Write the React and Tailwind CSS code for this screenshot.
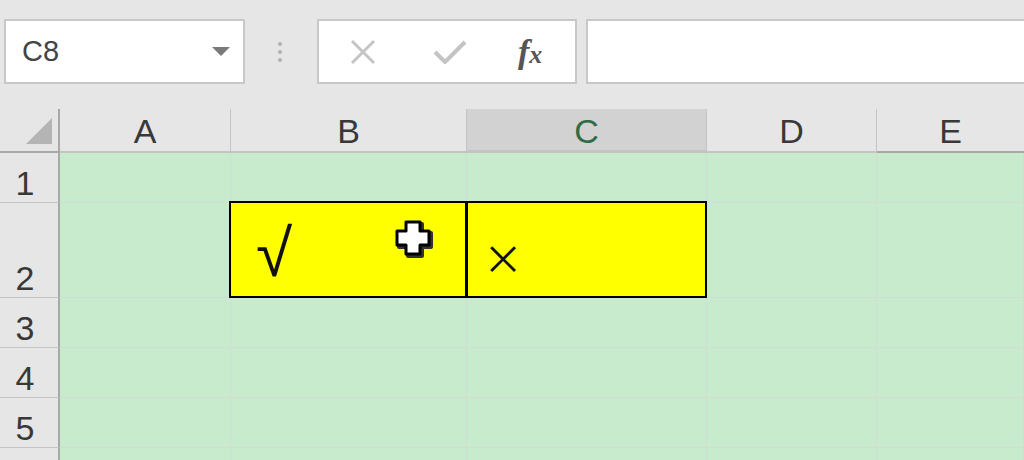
import React from "react";

const font = { fontFamily: '"Liberation Sans", "Noto Sans CJK SC", sans-serif' };

function HeaderCell({ w, label, selected, last }) {
  return (
    <div
      className={`${w} h-full flex items-center justify-center text-[34px] leading-none ${
        selected
          ? "bg-[#d2d2d2] text-[#2f6b47] border-b-[3px] border-[#217346]"
          : "text-[#383838] border-b-2 border-[#a8a8a8]"
      } ${last ? "" : "border-r border-[#c4c4c4]"}`}
    >
      <span className="pt-[2px]">{label}</span>
    </div>
  );
}

function RowHeader({ h, n }) {
  return (
    <div
      className={`w-[60px] ${h} shrink-0 bg-[#e6e6e6] border-r-2 border-b border-r-[#a8a8a8] border-b-[#c4c4c4] flex items-end justify-center pr-[8px] pb-[2px] text-[34px] leading-none text-[#383838]`}
    >
      {n}
    </div>
  );
}

function Cell({ w, children, yellow, cls = "" }) {
  return (
    <div
      className={`${w} h-full relative border-r border-b border-[#d2dcd3] ${
        yellow ? "bg-[#ffff00]" : "bg-[#c8eacd]"
      } ${cls}`}
    >
      {children}
    </div>
  );
}

function Row({ h, n, children }) {
  return (
    <div className={`flex ${h}`}>
      <RowHeader h={h} n={n} />
      {children}
    </div>
  );
}

function EmptyCells() {
  return (
    <>
      <Cell w="w-[171px]" />
      <Cell w="w-[236px]" />
      <Cell w="w-[240px]" />
      <Cell w="w-[170px]" />
      <Cell w="flex-1" />
    </>
  );
}

export default function App() {
  return (
    <div className="w-[1024px] h-[460px] overflow-hidden bg-[#e6e6e6] relative" style={font}>
      {/* Formula bar */}
      <div className="h-[109px] flex items-start pt-[19px] pl-[4px]">
        <div className="w-[241px] h-[65px] shrink-0 bg-white border-2 border-[#c8c8c8] flex items-center justify-between pl-[16px] pr-[13px]">
          <span className="text-[29px] leading-none text-[#444444]">C8</span>
          <svg width="18" height="9" viewBox="0 0 18 9">
            <path d="M0 0 L18 0 L9 9 Z" fill="#7a7a7a" />
          </svg>
        </div>
        <div className="w-[72px] h-[65px] shrink-0 flex flex-col items-center justify-center gap-[4px] pr-[2px]">
          <div className="w-[4px] h-[4px] rounded-full bg-[#b0b0b0]" />
          <div className="w-[4px] h-[4px] rounded-full bg-[#b0b0b0]" />
          <div className="w-[4px] h-[4px] rounded-full bg-[#b0b0b0]" />
        </div>
        <div className="w-[260px] h-[65px] shrink-0 bg-white border-2 border-[#c8c8c8] flex items-center">
          <div className="w-[30px]" />
          <svg width="28" height="26" viewBox="0 0 28 26">
            <path d="M3 2 L25 24 M25 2 L3 24" stroke="#c4c4c4" strokeWidth="3" fill="none" />
          </svg>
          <div className="w-[56px]" />
          <svg width="34" height="26" viewBox="0 0 34 26">
            <path d="M2 13 L12 23 L32 3" stroke="#c4c4c4" strokeWidth="4" fill="none" strokeLinejoin="round" />
          </svg>
          <div className="w-[51px]" />
          <span
            className="text-[34px] leading-none text-[#555555] italic font-bold"
            style={{ fontFamily: '"Liberation Serif", serif' }}
          >
            f<span className="text-[26px]">x</span>
          </span>
        </div>
        <div className="flex-1 h-[65px] ml-[9px] bg-white border-2 border-r-0 border-[#c8c8c8]" />
      </div>

      {/* Column headers */}
      <div className="flex h-[44px]">
        <div className="w-[60px] h-full shrink-0 border-r-2 border-b-2 border-[#a8a8a8] flex items-end justify-end pr-[6px] pb-[7px]">
          <svg width="26" height="26" viewBox="0 0 26 26">
            <path d="M26 0 L26 26 L0 26 Z" fill="#b4b4b4" />
          </svg>
        </div>
        <HeaderCell w="w-[171px]" label="A" />
        <HeaderCell w="w-[236px]" label="B" />
        <HeaderCell w="w-[240px]" label="C" selected />
        <HeaderCell w="w-[170px]" label="D" />
        <HeaderCell w="flex-1" label="E" last />
      </div>

      {/* Rows */}
      <Row h="h-[50px]" n="1">
        <EmptyCells />
      </Row>
      <Row h="h-[95px]" n="2">
        <Cell w="w-[171px]" />
        <Cell w="w-[236px]" yellow cls="flex items-end pl-[25px] pb-[11px]">
          <div className="absolute -left-[2px] -top-[2px] -right-[1px] -bottom-[1px] border-2 border-black pointer-events-none" />
          <span className="text-[66px] leading-none text-[#111111]">√</span>
        </Cell>
        <Cell w="w-[240px]" yellow cls="flex items-end pl-[16px] pb-[20px]">
          <div className="absolute -left-[1px] -top-[2px] -right-[1px] -bottom-[1px] border-2 border-black pointer-events-none" />
          <span
            className="text-[40px] leading-none text-[#111111]"
            style={{ fontFamily: '"Noto Sans CJK SC", "DejaVu Sans", sans-serif' }}
          >
            ×
          </span>
        </Cell>
        <Cell w="w-[170px]" />
        <Cell w="flex-1" />
      </Row>
      <Row h="h-[50px]" n="3">
        <EmptyCells />
      </Row>
      <Row h="h-[50px]" n="4">
        <EmptyCells />
      </Row>
      <Row h="h-[50px]" n="5">
        <EmptyCells />
      </Row>
      <Row h="h-[50px]" n="">
        <EmptyCells />
      </Row>

      {/* Mouse cursor */}
      <svg
        className="absolute left-[394px] top-[219px] pointer-events-none"
        width="42"
        height="42"
        viewBox="0 0 42 42"
      >
        <path
          d="M12 3 L26 3 L26 12 L35 12 L35 26 L26 26 L26 35 L12 35 L12 26 L3 26 L3 12 L12 12 Z"
          fill="#333"
          transform="translate(2 2)"
          strokeLinejoin="round"
          stroke="#333"
          strokeWidth="4"
        />
        <path
          d="M12 3 L26 3 L26 12 L35 12 L35 26 L26 26 L26 35 L12 35 L12 26 L3 26 L3 12 L12 12 Z"
          fill="#ffffff"
          stroke="#000000"
          strokeWidth="3"
          strokeLinejoin="round"
        />
      </svg>
    </div>
  );
}
